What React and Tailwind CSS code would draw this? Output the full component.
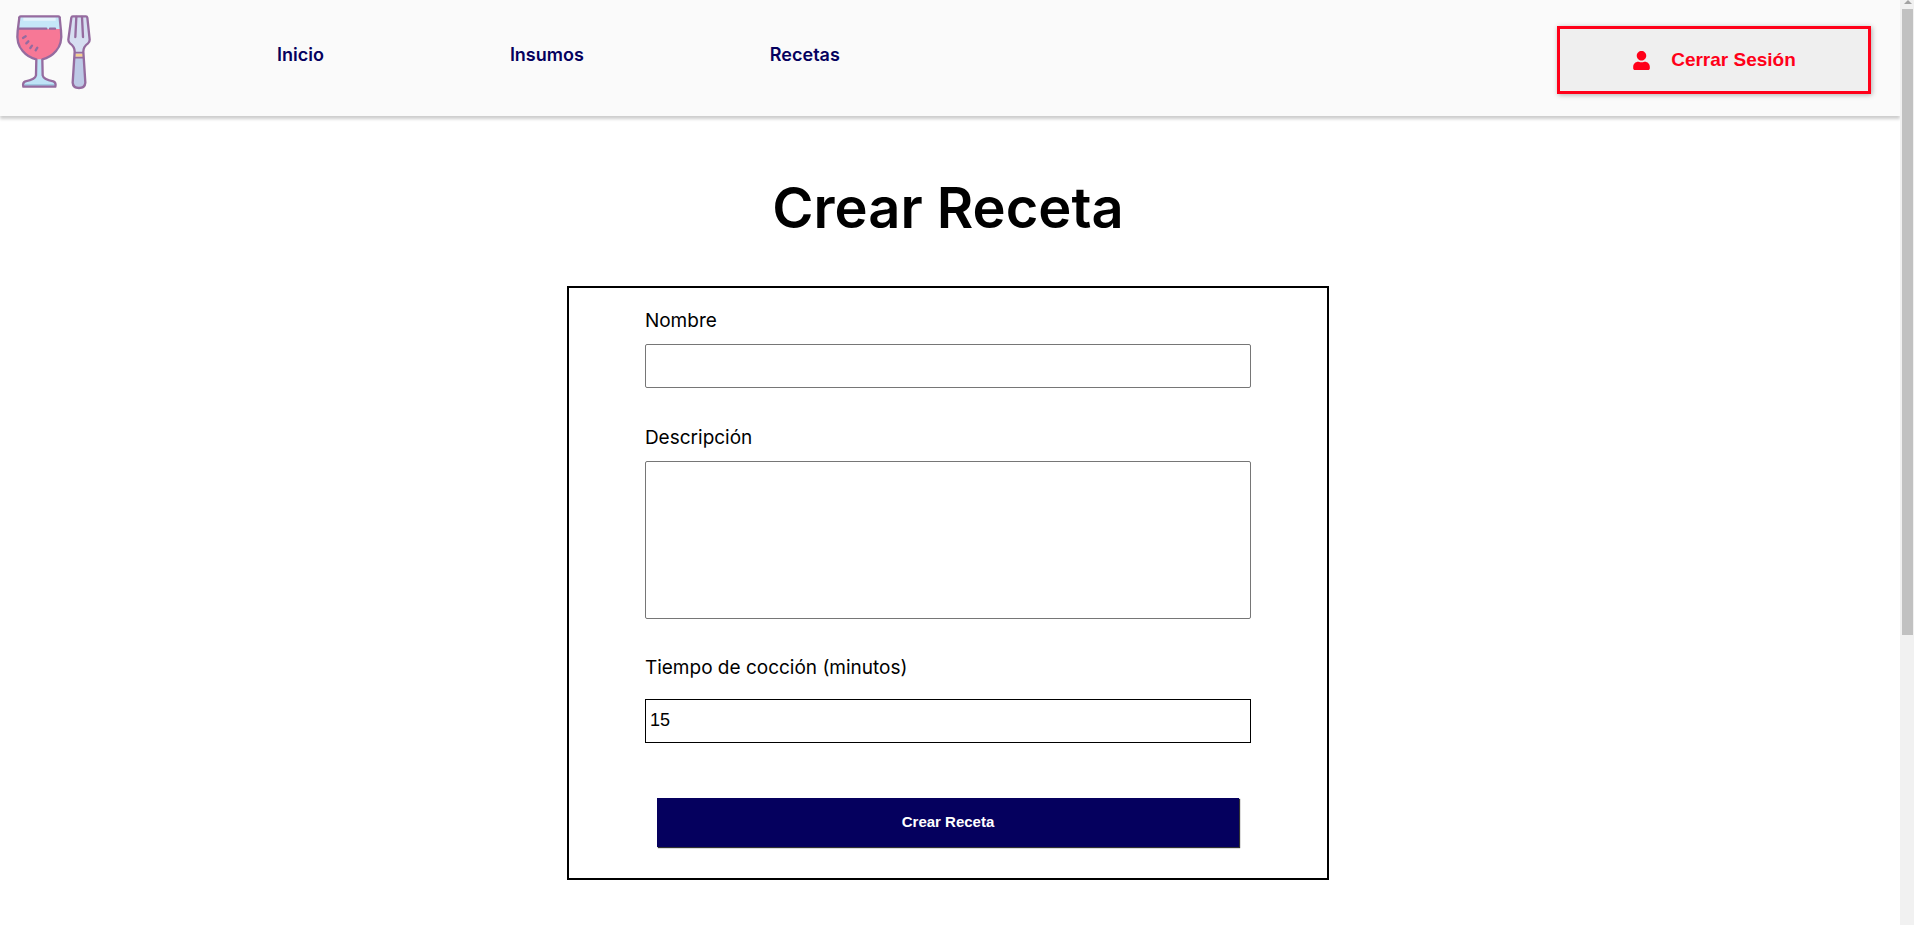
import { FaUser } from "react-icons/fa";

function Logo() {
  return (
    <svg viewBox="0 0 360 360" className="h-[120px] w-[120px]" role="img" aria-label="Copa y tenedor" strokeLinejoin="round" strokeLinecap="round">
      <path d="M109 172h18l2 56q2 12 32 18 8 3 5 14H70q-3-11 5-14 30-6 32-18z" fill="#bfe3f6" />
      <path d="M75 252h88l3 8H70z" fill="#9fc9e2" />
      <path d="M60 50h117l4 37H55z" fill="#c5e7f8" />
      <path d="M70 52h97v10H70z" fill="#e4f3fc" />
      <path d="M55 87h126q9 40-13 66-17 20-41 25h-18q-24-5-41-25-22-26-13-66z" fill="#f77896" />
      <g fill="none" stroke="#956b9f" strokeWidth="7">
        <path d="M62 49h113q4 0 4 4l4 40q5 38-15 60-17 20-41 25l1 48q2 12 32 18 9 4 6 16H70q-3-12 6-16 30-6 32-18l1-48q-24-5-41-25-20-22-15-60l5-40q0-4 4-4z" />
        <path d="M57 86h82M150 86h15M69 114l8-5M79 130l6-6M91 144l5-7M107 151l5-8" />
      </g>
      <path d="M215 49h45l9 72q0 6-5 10-14 10-14 25v6l6 86q-1 16-19 16t-19-16l6-86v-6q0-15-14-25-5-4-5-10z" fill="#d6def1" />
      <path d="M224 174h26l6 74q-1 16-19 16t-19-16z" fill="#bdc9e6" />
      <path d="M226 161h23v9h-23z" fill="#f6cf8e" />
      <g fill="none" stroke="#956b9f" strokeWidth="7">
        <path d="M218 49h40q3 0 4 4l7 66q0 7-5 11-14 10-14 25l6 93q-1 16-19 16t-19-16l6-93q0-15-14-25-5-4-5-11l9-66q1-4 4-4z" />
        <path d="M229 51l-3 60M246 51l3 60" />
        <path d="M226 158h23M226 173h23" strokeWidth="5" />
      </g>
    </svg>
  );
}

const links = ["Inicio", "Insumos", "Recetas"];

const label = "block text-[19px] leading-7";

export default function App() {
  return (
    <div className="flex min-h-screen bg-white font-[Inter,sans-serif] text-black">
      <div className="min-w-0 flex-1">
        <header className="flex h-[116px] justify-between bg-[#fafafa] shadow-[0_3px_3px_rgba(0,0,0,0.2)]">
          <div className="flex">
            <Logo />
            <nav className="ml-[157px] flex gap-[186px] pt-[41px]">
              {links.map((name) => (
                <a key={name} href="#" className="text-[18px] leading-7 font-semibold text-[#05005e]">
                  {name}
                </a>
              ))}
            </nav>
          </div>
          <button type="button" className="mt-[26px] mr-[29px] flex h-[68px] w-[314px] items-center justify-center gap-5 border-3 border-[#ff0019] bg-[#efefef] font-['Liberation_Sans',sans-serif] text-[19px] font-bold text-[#ff0019] shadow-[1px_1px_5px_rgba(0,0,0,0.3)]">
            <FaUser size={19} />
            Cerrar Sesión
          </button>
        </header>

        <main className="flex flex-col items-center pt-[50px] pr-1">
          <h1 className="text-[56px] leading-[84px] font-semibold">Crear Receta</h1>
          <form className="mt-9 w-[40.2%] border-2 border-black px-[76px] pt-[19px] pb-[31px]" onSubmit={(e) => e.preventDefault()}>
            <label htmlFor="nombre" className={label}>Nombre</label>
            <input id="nombre" type="text" className="mt-[9px] block h-11 w-full rounded-xs border border-[#767676] px-1" />
            <label htmlFor="descripcion" className={label + " mt-9"}>Descripción</label>
            <textarea id="descripcion" className="mt-[9px] block h-[158px] w-full resize-none rounded-xs border border-[#767676] px-1" />
            <label htmlFor="tiempo" className={label + " mt-[35px]"}>Tiempo de cocción (minutos)</label>
            <input id="tiempo" type="text" inputMode="numeric" defaultValue="15" className="mt-[17px] block h-11 w-full border border-black px-1 pb-0.5 font-['Liberation_Sans',sans-serif] text-[18px]" />
            <div className="mt-[55px] px-3">
              <button type="submit" className="h-[49px] w-full bg-[#05005e] font-['Liberation_Sans',sans-serif] text-[15px] font-bold text-white shadow-[1px_1px_1px_#333]">
                Crear Receta
              </button>
            </div>
          </form>
        </main>
      </div>

      <div className="flex w-[14px] flex-col items-center bg-[#f1f1f1] pl-px" aria-hidden="true">
        <svg viewBox="0 0 12 9" className="h-[9px] w-3">
          <path d="M2 4l4-4 4 4z" fill="#a3a3a3" />
        </svg>
        <div className="h-[626px] w-[11px] bg-[#c1c1c1]" />
      </div>
    </div>
  );
}
